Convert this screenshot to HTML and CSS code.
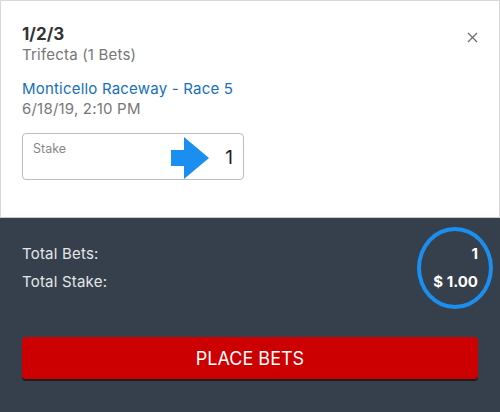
FILE: index.html
```html
<!DOCTYPE html>
<html>
<head>
<meta charset="utf-8">
<link rel="stylesheet" href="styles.css">
</head>
<body>
<div class="slip">
  <section class="bet">
    <div class="bet-head">
      <div>
        <div class="combo">1/2/3</div>
        <div class="type">Trifecta (1 Bets)</div>
      </div>
      <button class="close" aria-label="Close">
        <svg width="11" height="11" viewBox="0 0 11 11"><path d="M1 1L10 10M10 1L1 10" stroke="#6f6f6f" stroke-width="1.3" fill="none"/></svg>
      </button>
    </div>
    <div class="race">Monticello Raceway - Race 5</div>
    <div class="date">6/18/19, 2:10 PM</div>
    <div class="stake">
      <span class="stake-label">Stake</span>
      <span class="stake-value">1</span>
      <svg class="arrow" width="40" height="42" viewBox="0 0 40 42"><path d="M0 13H13V0L38 21L13 42V29H0Z" fill="#1a8ff0"/></svg>
    </div>
  </section>
  <section class="summary">
    <div class="totals">
      <div class="row"><span>Total Bets:</span><span class="val">1</span></div>
      <div class="row"><span>Total Stake:</span><span class="val">$ 1.00</span></div>
      <div class="ring"></div>
    </div>
    <button class="place">PLACE BETS</button>
  </section>
</div>
</body>
</html>
```
FILE: styles.css
```css
html, body {
  margin: 0;
  padding: 0;
}
body {
  width: 500px;
  height: 412px;
  overflow: hidden;
  font-family: "Inter", "Open Sans", sans-serif;
  background: #36404c;
}
.slip {
  display: flex;
  flex-direction: column;
  height: 412px;
}
.bet {
  background: #fff;
  border: 1px solid #d8d8d8;
  border-bottom: 1px solid #c9c9c9;
  height: 218px;
  box-sizing: border-box;
  padding: 22px 21px 0 21px;
}
.bet-head {
  display: flex;
  justify-content: space-between;
  align-items: flex-start;
}
.combo {
  font-size: 17px;
  font-weight: 700;
  color: #333;
  line-height: 22px;
}
.type {
  font-size: 15px;
  color: #777;
  line-height: 20px;
  letter-spacing: 0.2px;
}
.close {
  border: 0;
  background: none;
  padding: 0;
  margin: 9px 0 0 0;
  width: 11px;
  height: 11px;
  display: flex;
}
.race {
  margin-top: 14px;
  font-size: 15px;
  color: #1570c0;
  line-height: 20px;
  letter-spacing: 0.2px;
}
.date {
  font-size: 15px;
  color: #777;
  line-height: 20px;
  letter-spacing: 0.2px;
}
.stake {
  position: relative;
  margin-top: 14px;
  width: 222px;
  height: 47px;
  box-sizing: border-box;
  border: 1px solid #bdbdbd;
  border-radius: 4px;
  display: flex;
  justify-content: space-between;
  align-items: flex-start;
  padding: 6px 10px 0 10px;
}
.stake-label {
  font-size: 12.5px;
  color: #888;
  line-height: 18px;
}
.stake-value {
  font-size: 19px;
  color: #222;
  line-height: 26px;
  margin-top: 5px;
}
.arrow {
  position: absolute;
  left: 148px;
  top: 3px;
}
.summary {
  flex: 1;
  padding: 0 22px;
  display: flex;
  flex-direction: column;
}
.totals {
  position: relative;
  margin-top: 26px;
  display: flex;
  flex-direction: column;
  gap: 8px;
}
.row {
  display: flex;
  justify-content: space-between;
  font-size: 15px;
  line-height: 20px;
  letter-spacing: 0.2px;
  color: #e4e6e9;
}
.val {
  font-weight: 700;
  color: #fff;
  letter-spacing: 0;
}
.row:last-of-type .val {
  font-size: 16px;
}
.ring {
  position: absolute;
  right: -15px;
  top: -17px;
  width: 68px;
  height: 74px;
  border: 4px solid #1a8ff0;
  border-radius: 50%;
}
.place {
  margin-top: 45px;
  height: 42px;
  border: 0;
  border-radius: 4px;
  background: #cc0000;
  color: #fff;
  font-family: inherit;
  font-size: 18px;
  box-shadow: 0 2px 0 #1d1d1d;
}
```
